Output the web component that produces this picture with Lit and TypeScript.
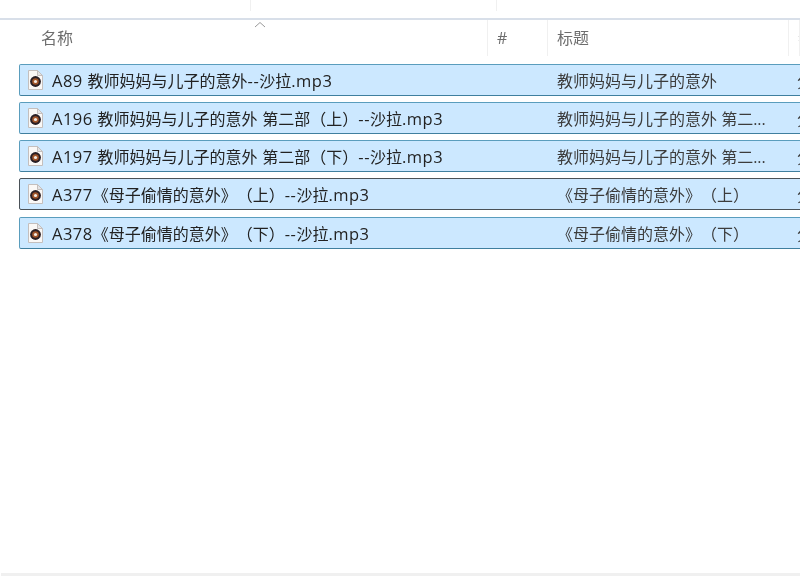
import { LitElement, html, css, svg } from "lit";
import { customElement } from "lit/decorators.js";

const rows = [
  { name: "A89 教师妈妈与儿子的意外--沙拉.mp3", title: "教师妈妈与儿子的意外", focus: false },
  { name: "A196 教师妈妈与儿子的意外 第二部（上）--沙拉.mp3", title: "教师妈妈与儿子的意外 第二...", focus: false },
  { name: "A197 教师妈妈与儿子的意外 第二部（下）--沙拉.mp3", title: "教师妈妈与儿子的意外 第二...", focus: false },
  { name: "A377《母子偷情的意外》（上）--沙拉.mp3", title: "《母子偷情的意外》（上）", focus: true },
  { name: "A378《母子偷情的意外》（下）--沙拉.mp3", title: "《母子偷情的意外》（下）", focus: false },
];

const fileIcon = svg`<svg class="icon" width="16" height="20" viewBox="0 0 16 20">
  <path d="M1.5 .5H10.5L15.5 5.5V19.5H1.5Z" fill="#faf8f6" stroke="#c4bfbd"/>
  <path d="M10.5 .5V5.5H15.5Z" fill="#e4e4e6" stroke="#c4bfbd"/>
  <circle cx="8.5" cy="11.5" r="5.4" fill="#2a1f24"/>
  <circle cx="8.5" cy="11.5" r="3.3" fill="#a0552a"/>
  <circle cx="8.5" cy="11.5" r="1.6" fill="#f4ece4"/>
</svg>`;

const parts = (s: string) =>
  s.split(/([A-Za-z0-9.\- ]+)/).map((p, i) =>
    i % 2 ? html`<span class="lat">${p}</span>` : p
  );

@customElement("app-root")
export class AppRoot extends LitElement {
  static styles = css`
    :host {
      display: flex;
      flex-direction: column;
      width: 800px;
      height: 576px;
      overflow: hidden;
      background: #fff;
      font-family: "Open Sans", "Noto Sans CJK SC", sans-serif;
      font-size: 16px;
      color: #2b2b2b;
      text-spacing-trim: space-all;
      filter: blur(0.3px);
    }
    .top {
      display: grid;
      grid-template-columns: 251px 246px 1fr;
      height: 18px;
      border-bottom: 2px solid #d8dfe9;
      flex: none;
    }
    .top div {
      border-right: 1px solid #f0f0f0;
      height: 11px;
    }
    .top div:last-child { border-right: 0; }
    .head {
      position: relative;
      display: grid;
      grid-template-columns: 488px 60px 241px 11px;
      height: 36px;
      flex: none;
      color: #6d6d6d;
      line-height: 36px;
    }
    .head > div {
      padding-left: 9px;
      border-right: 1px solid #f0f0f0;
      white-space: nowrap;
      overflow: hidden;
    }
    .head > div:first-child { padding-left: 41px; }
    .head > div:last-child { border-right: 0; padding-left: 8px; }
    .caret {
      position: absolute;
      left: 254px;
      top: 1px;
    }
    .list {
      display: flex;
      flex-direction: column;
      gap: 6px;
      padding: 8px 0 0 19px;
      flex: 1;
    }
    .row {
      display: grid;
      grid-template-columns: 537px 240px 1fr;
      align-items: center;
      height: 32px;
      box-sizing: border-box;
      width: 800px;
      background: #cce8ff;
      border: 1px solid #5a9dbd;
      border-bottom-color: #3f7f9f;
      border-radius: 2px;
      white-space: nowrap;
      overflow: hidden;
    }
    .row.focus { border-color: #4a5157; }
    .row.last { margin-top: 1px; }
    .name {
      display: flex;
      align-items: center;
      gap: 9px;
      padding-left: 7px;
      color: #222;
    }
    .lat { font-size: 16.5px; letter-spacing: 0.5px; }
    .icon { flex: none; }
    .title { color: #3c3c3c; }
    .extra { color: #3c3c3c; }
    .foot {
      height: 3px;
      margin-left: 1px;
      background: #f0f0f0;
      flex: none;
    }
  `;

  render() {
    return html`
      <div class="top"><div></div><div></div><div></div></div>
      <div class="head">
        <div>名称</div><div>#</div><div>标题</div><div>参</div>
        <svg class="caret" width="12" height="7" viewBox="0 0 12 7">
          <path d="M1 6L6 1.5L11 6" fill="none" stroke="#9a9a9a"/>
        </svg>
      </div>
      <div class="list">
        ${rows.map(
          (r, i) => html`<div class="row ${r.focus ? "focus" : ""} ${i === 4 ? "last" : ""}">
            <div class="name">${fileIcon}<span>${parts(r.name)}</span></div>
            <div class="title">${r.title}</div>
            <div class="extra">分</div>
          </div>`
        )}
      </div>
      <div class="foot"></div>
    `;
  }
}
